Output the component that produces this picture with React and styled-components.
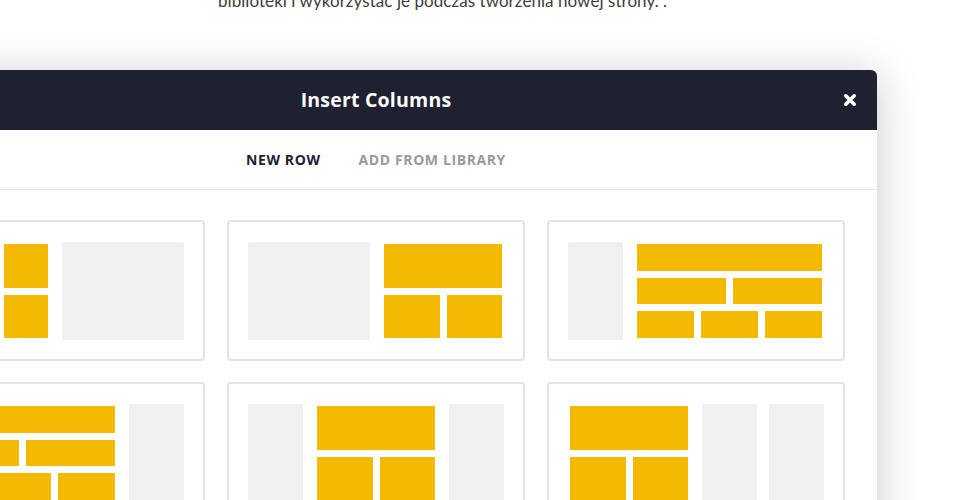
import React from "react";
import styled, { createGlobalStyle } from "styled-components";

const Global = createGlobalStyle`
  html, body { margin: 0; padding: 0; height: 500px; overflow: hidden; background: #fff; }
  body { font-family: "Open Sans", "Noto Sans", sans-serif; }
`;

const Page = styled.div`
  width: 965px;
  height: 500px;
  overflow: hidden;
  background: #fff;
`;

const Intro = styled.p`
  margin: -12px 0 0 218px;
  font-family: "Lato", "Noto Sans", sans-serif;
  font-size: 17px;
  line-height: 26px;
  color: #3c3c3c;
  letter-spacing: 0.05px;
  white-space: nowrap;
`;

const Modal = styled.div`
  margin: 56px 0 0 -125px;
  width: 1002px;
  background: #fff;
  border-radius: 6px 6px 0 0;
  box-shadow: 0 6px 45px rgba(0, 0, 0, 0.22);
`;

const Header = styled.div`
  height: 60px;
  background: #1f2131;
  border-radius: 6px 6px 0 0;
  display: grid;
  grid-template-columns: 1fr auto 1fr;
  align-items: center;
  padding: 0 20px;
`;

const Title = styled.h2`
  grid-column: 2;
  margin: -2px 0 0;
  color: #fff;
  font-size: 19.5px;
  font-weight: 700;
  letter-spacing: 0.2px;
`;

const Close = styled.button`
  grid-column: 3;
  justify-self: end;
  border: 0;
  padding: 0;
  background: none;
  display: flex;
  cursor: pointer;
`;

const Tabs = styled.div`
  height: 59px;
  border-bottom: 1px solid #e6e6e6;
  display: flex;
  justify-content: center;
  align-items: center;
  gap: 38px;
`;

const Tab = styled.span`
  font-size: 14px;
  font-weight: 700;
  letter-spacing: 0.6px;
  color: ${(p) => (p.$active ? "#1f2131" : "#9a9a9a")};
`;

const Body = styled.div`
  padding: 30px 32px 40px;
  display: grid;
  grid-template-columns: repeat(3, 1fr);
  column-gap: 22px;
  row-gap: 21px;
`;

const Card = styled.div`
  border: 2px solid #e3e3e3;
  border-radius: 4px;
  padding: 20px 19px 19px;
`;

const Preview = styled.div`
  height: 98px;
  display: grid;
  grid-template-columns: repeat(4, 1fr);
  gap: 12px;
`;

const GreyCol = styled.div`
  grid-column: span ${(p) => p.$span};
  background: #f0f0f0;
  border-radius: 2px;
`;

const YellowCol = styled.div`
  grid-column: span ${(p) => p.$span};
  padding: 2px;
  display: flex;
  flex-direction: column;
  gap: 7px;
`;

const YRow = styled.div`
  flex: 1;
  display: flex;
  gap: 7px;
`;

const Cell = styled.div`
  flex: ${(p) => p.$grow};
  background: #f4b902;
`;

const layouts = [
  [{ t: "y", span: 2, rows: [[3, 2], [3, 2]] }, { t: "g", span: 2 }],
  [{ t: "g", span: 2 }, { t: "y", span: 2, rows: [[1], [1, 1]] }],
  [{ t: "g", span: 1 }, { t: "y", span: 3, rows: [[1], [1, 1], [1, 1, 1]] }],
  [{ t: "y", span: 3, rows: [[1], [1, 1], [1, 1, 1]] }, { t: "g", span: 1 }],
  [{ t: "g", span: 1 }, { t: "y", span: 2, rows: [[1], [1, 1]] }, { t: "g", span: 1 }],
  [{ t: "y", span: 2, rows: [[1], [1, 1]] }, { t: "g", span: 1 }, { t: "g", span: 1 }],
];

function CloseIcon() {
  return (
    <svg width="14" height="14" viewBox="0 0 14 14">
      <path d="M2.8 2.8 L11.2 11.2 M11.2 2.8 L2.8 11.2" stroke="#fff" strokeWidth="3.6" strokeLinecap="round" />
    </svg>
  );
}

export default function App() {
  return (
    <Page>
      <Global />
      <Intro>biblioteki i wykorzystać je podczas tworzenia nowej strony. .</Intro>
      <Modal>
        <Header>
          <Title>Insert Columns</Title>
          <Close aria-label="Close">
            <CloseIcon />
          </Close>
        </Header>
        <Tabs>
          <Tab $active>NEW ROW</Tab>
          <Tab>ADD FROM LIBRARY</Tab>
        </Tabs>
        <Body>
          {layouts.map((cols, i) => (
            <Card key={i}>
              <Preview>
                {cols.map((c, j) =>
                  c.t === "g" ? (
                    <GreyCol key={j} $span={c.span} />
                  ) : (
                    <YellowCol key={j} $span={c.span}>
                      {c.rows.map((r, k) => (
                        <YRow key={k}>
                          {r.map((g, m) => (
                            <Cell key={m} $grow={g} />
                          ))}
                        </YRow>
                      ))}
                    </YellowCol>
                  )
                )}
              </Preview>
            </Card>
          ))}
        </Body>
      </Modal>
    </Page>
  );
}
